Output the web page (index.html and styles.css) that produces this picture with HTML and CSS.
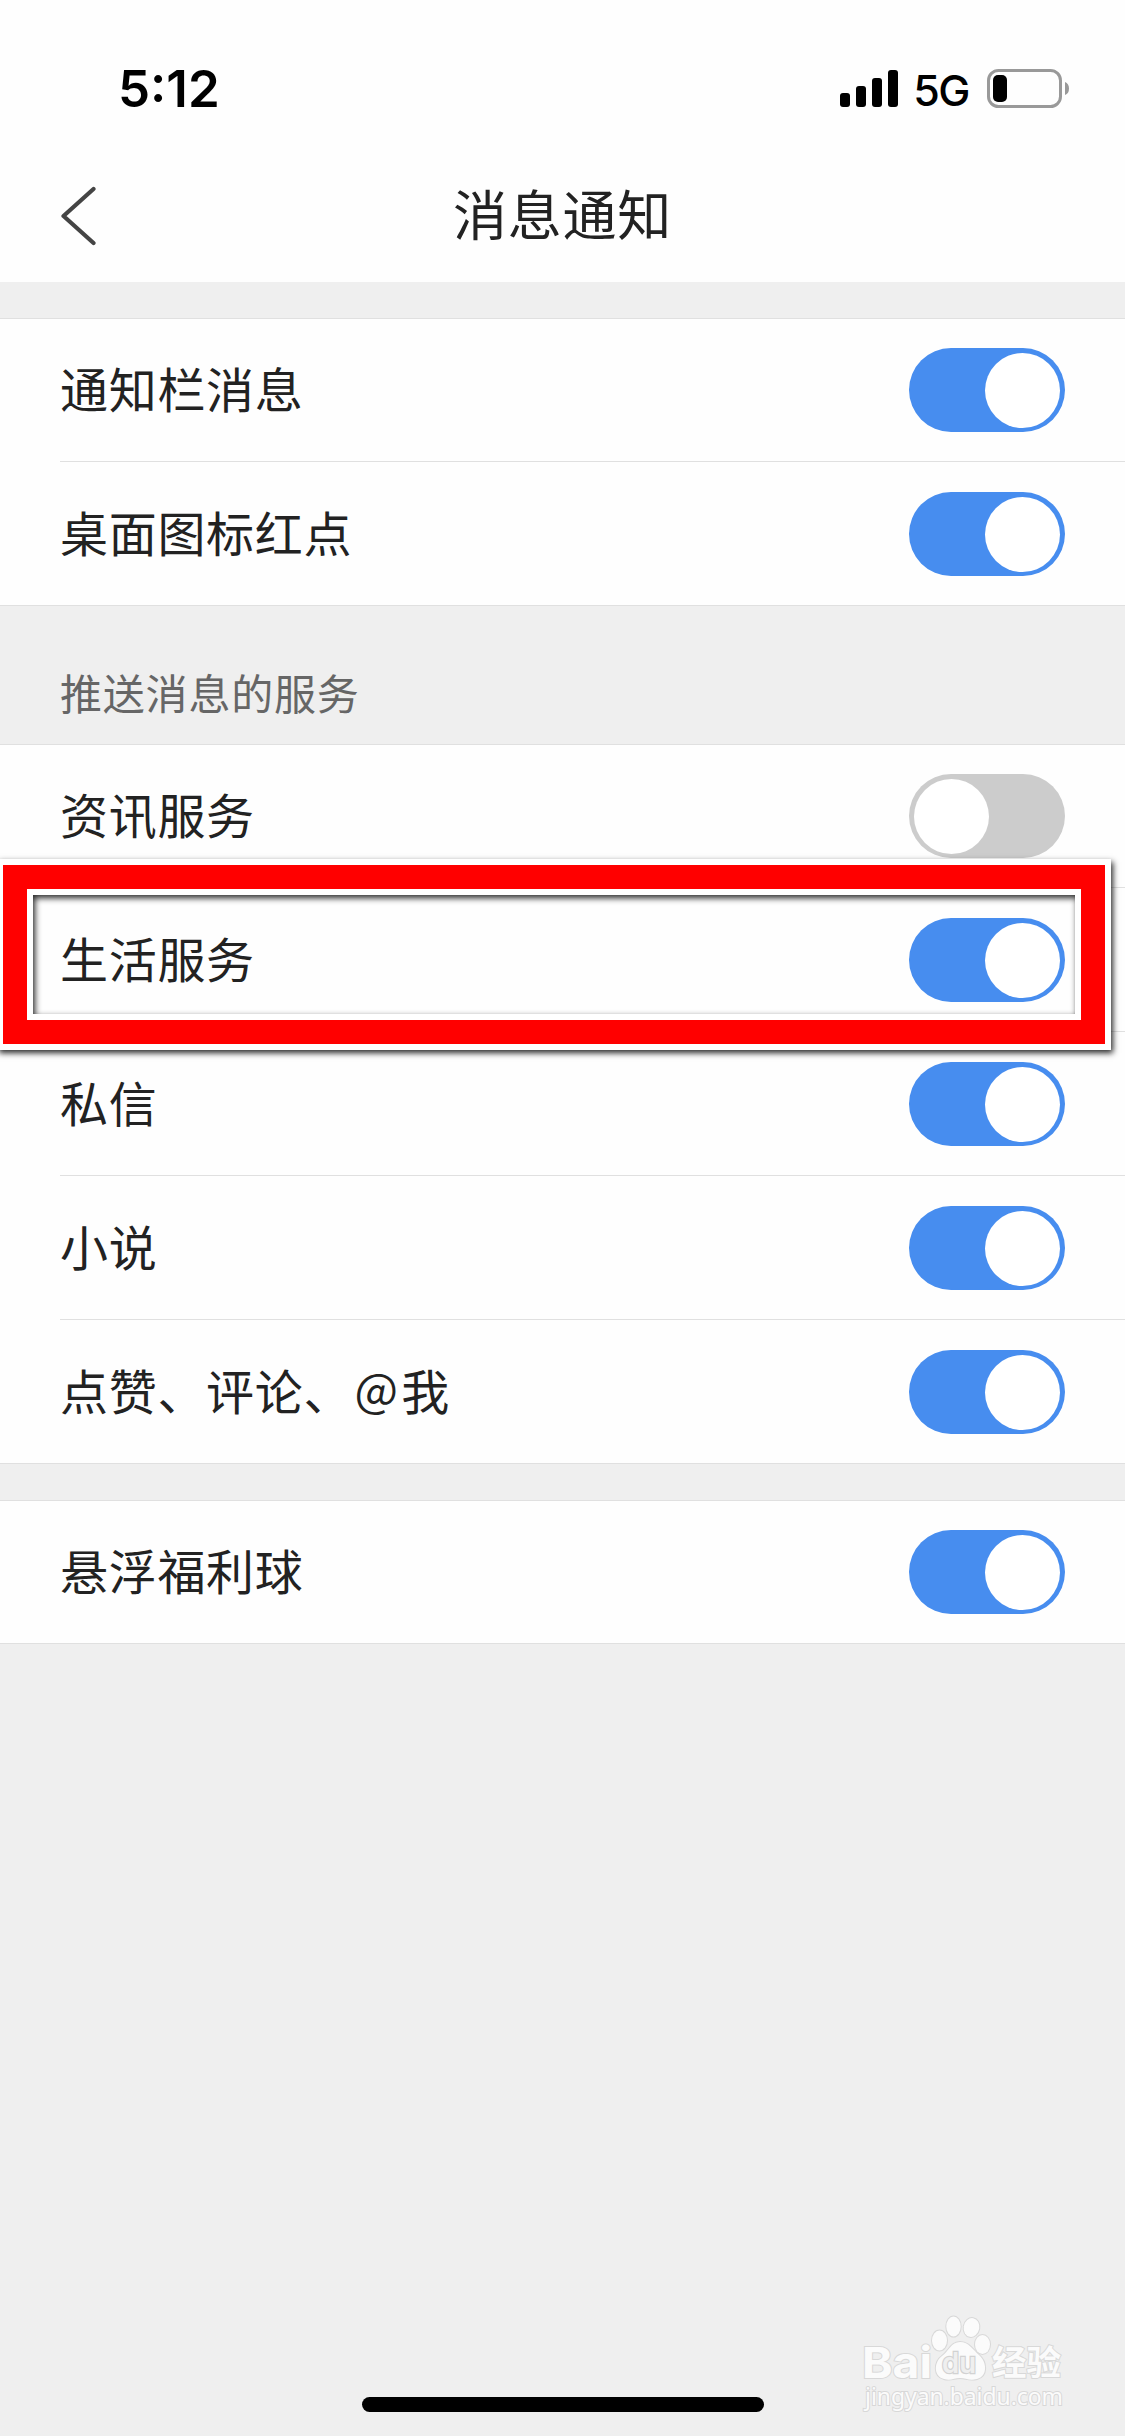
FILE: index.html
```
<!DOCTYPE html>
<html lang="zh-CN">
<head>
<meta charset="utf-8">
<title>消息通知</title>
<link rel="stylesheet" href="styles.css">
</head>
<body>
<div class="screen">
  <header class="header">
    <div class="status">
      <span class="time">5:12</span>
      <div class="indicators">
        <svg class="signal" width="58" height="37" viewBox="0 0 58 37"><rect x="0" y="23" width="10" height="14" rx="3"/><rect x="16" y="16" width="10" height="21" rx="3"/><rect x="32" y="8" width="10" height="29" rx="3"/><rect x="48" y="0" width="10" height="37" rx="3"/></svg>
        <span class="network">5G</span>
        <svg class="battery" width="82" height="39" viewBox="0 0 82 39"><rect x="1.5" y="1.5" width="72" height="36" rx="10" fill="none" stroke="#999" stroke-width="3"/><rect x="6" y="6" width="14" height="27" rx="5"/><path d="M78 13q4 1.500 4 6.500t-4 6.500z" fill="#999"/></svg>
      </div>
    </div>
    <nav class="nav">
      <svg class="back" width="40" height="62" viewBox="0 0 40 62"><path d="M37.500 4L7.500 31L37.500 58" fill="none" stroke="#444" stroke-width="4.200" stroke-linecap="round" stroke-linejoin="round"/></svg>
      <h1 class="title">消息通知</h1>
    </nav>
  </header>
  <main class="content">
    <section class="group">
      <div class="row"><span class="label">通知栏消息</span><span class="toggle on"></span></div>
      <div class="row"><span class="label">桌面图标红点</span><span class="toggle on"></span></div>
    </section>
    <h2 class="caption">推送消息的服务</h2>
    <section class="group">
      <div class="row"><span class="label">资讯服务</span><span class="toggle"></span></div>
      <div class="row"><span class="label">生活服务</span><span class="toggle on"></span><div class="highlight"></div></div>
      <div class="row"><span class="label">私信</span><span class="toggle on"></span></div>
      <div class="row"><span class="label">小说</span><span class="toggle on"></span></div>
      <div class="row"><span class="label">点赞、评论、<span class="at">@</span>我</span><span class="toggle on"></span></div>
    </section>
    <section class="group last">
      <div class="row"><span class="label">悬浮福利球</span><span class="toggle on"></span></div>
    </section>
  </main>
  <svg class="watermark" width="215" height="110" viewBox="0 0 215 110">
    <g class="mark">
      <text class="brand" x="2" y="67.500" textLength="70" lengthAdjust="spacingAndGlyphs">Bai</text>
      <ellipse cx="79.500" cy="30.500" rx="7.500" ry="10"/>
      <ellipse cx="93.500" cy="16.500" rx="7.200" ry="10"/>
      <ellipse cx="111.500" cy="17.500" rx="7.800" ry="9.500" transform="rotate(10 111.500 17.500)"/>
      <ellipse cx="122.500" cy="34.500" rx="7.500" ry="9.500"/>
      <path d="M100 32C109 32 113 40 119 45C127 52 128 66 117 69C109 71 106 68 100 68C94 68 91 71 84 69C73 66 74 52 82 46C89 41 91 32 100 32Z"/>
      <text class="du" x="82" y="63" textLength="34" lengthAdjust="spacingAndGlyphs">du</text>
      <text class="cn" x="132" y="65" textLength="69" lengthAdjust="spacingAndGlyphs">经验</text>
      <text class="url" x="5" y="94.500" textLength="198" lengthAdjust="spacingAndGlyphs">jingyan.baidu.com</text>
    </g>
  </svg>
  <div class="home"></div>
</div>
</body>
</html>
```
FILE: styles.css
```
* { box-sizing: border-box; }
body {
  margin: 0;
  background: #efefef;
  font-family: "Noto Sans CJK SC", sans-serif;
  color: #222;
}
.screen {
  position: relative;
  width: 1125px;
  height: 2436px;
  overflow: hidden;
  background: #efefef;
}
.header { height: 282px; background: #fefefe; }
.status {
  display: flex;
  justify-content: space-between;
  align-items: center;
  height: 150px;
  padding: 27px 56px 0 118px;
  font-family: Inter, sans-serif;
  color: #000;
}
.time { margin-top: 1px; font-size: 51px; font-weight: 600; line-height: 60px; letter-spacing: 0; }
.indicators { display: flex; align-items: center; }
.network { margin: 2px 18px 0 15px; font-size: 43px; font-weight: 500; line-height: 50px; letter-spacing: -1.5px; }
.nav {
  display: grid;
  grid-template-columns: 40px 1fr 40px;
  align-items: center;
  height: 132px;
  padding: 0 56px;
}
.title {
  margin: -6px 0 0;
  text-align: center;
  font-size: 54px;
  font-weight: 400;
  line-height: 80px;
  letter-spacing: .8px;
}
.content { padding-top: 36px; }
.group {
  background: #fefefe;
  box-shadow: inset 0 1px #e0e0e0, inset 0 -1px #e0e0e0;
}
.group.last { margin-top: 36px; }
.row {
  position: relative;
  display: flex;
  align-items: center;
  justify-content: space-between;
  height: 144px;
  margin-left: 60px;
  padding-right: 60px;
  box-shadow: inset 0 -1px #e0e0e0;
}
.label { margin-top: -6px; font-size: 48px; line-height: 72px; letter-spacing: .7px; }
.at {
  position: relative;
  top: -3px;
  display: inline-block;
  width: 49px;
  text-align: center;
  font-size: 46px;
  line-height: 60px;
}
.toggle {
  width: 156px;
  height: 84px;
  padding: 4.5px;
  border-radius: 42px;
  background: #ccc;
}
.toggle::before {
  content: "";
  display: block;
  width: 75px;
  height: 75px;
  border-radius: 50%;
  background: #fff;
}
.toggle.on { background: #478def; }
.toggle.on::before { margin-left: 71.800px; }
.caption {
  height: 138px;
  margin: 0;
  padding: 54px 60px 0;
  font-size: 42px;
  font-weight: 400;
  line-height: 64px;
  letter-spacing: .8px;
  color: #666;
}
.highlight {
  position: absolute;
  z-index: 2;
  left: -57.500px;
  top: -23px;
  width: 1102.500px;
  height: 178.500px;
  border: 24px solid #f00;
  box-shadow:
    0 0 0 6px #fff,
    2px 3px 6px 6px rgba(0, 0, 0, .85),
    inset 0 0 0 6px #fff,
    inset 2px 3px 6px 6px rgba(0, 0, 0, .85);
}
.watermark { position: absolute; left: 860px; top: 2309.500px; }
.mark { fill: #fbfbfb; stroke: #d8d8d8; stroke-width: 2px; paint-order: stroke; }
.brand { font: 700 43px Inter, sans-serif; }
.du { font: 600 29px Inter, sans-serif; fill: #efefef; stroke: #d2d2d2; stroke-width: 2.500px; }
.cn { font: 700 34px "Noto Sans CJK SC", sans-serif; }
.url { font: 400 23px "Noto Sans", sans-serif; }
.home {
  position: absolute;
  left: 362px;
  top: 2397px;
  width: 402px;
  height: 15px;
  border-radius: 8px;
  background: #000;
}
```
